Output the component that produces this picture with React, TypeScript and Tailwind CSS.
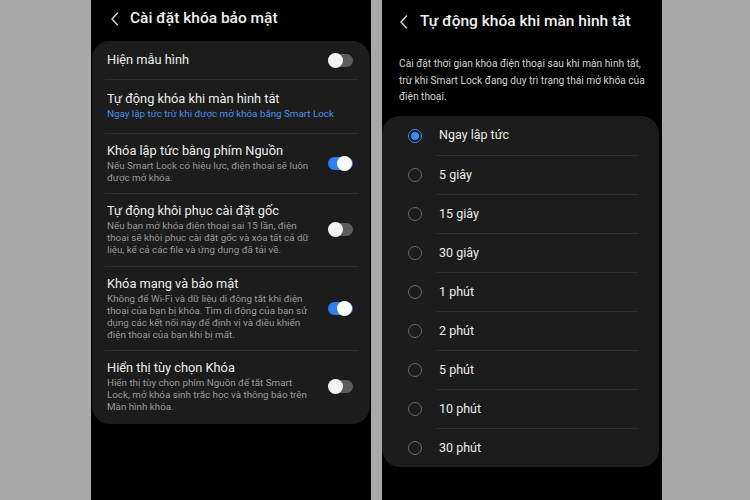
import React from "react";

const font = { fontFamily: "Roboto, 'Noto Sans', sans-serif" };

function Back() {
  return (
    <svg width="8" height="14" viewBox="0 0 8 14" className="shrink-0">
      <path d="M6.5 1 L1 7 L6.5 13" fill="none" stroke="#d6d6d6" strokeWidth="1.4" strokeLinecap="round" strokeLinejoin="round" />
    </svg>
  );
}

function Toggle({ on }: { on: boolean }) {
  return on ? (
    <div className="relative w-[25px] h-[13px] rounded-full bg-[#2f7ff0] shrink-0">
      <div className="absolute right-[1px] top-[-1px] w-[15px] h-[15px] rounded-full bg-white" />
    </div>
  ) : (
    <div className="relative w-[25px] h-[13px] rounded-full bg-[#5c5c5c] shrink-0">
      <div className="absolute left-0 top-[-1px] w-[15px] h-[15px] rounded-full bg-[#f2f2f2]" />
    </div>
  );
}

function Divider({ cls }: { cls: string }) {
  return <div className={`h-px bg-[#2e2e2e] ${cls}`} />;
}

type Row = { title: string; sub?: string[]; blue?: boolean; toggle?: boolean; pt: string; pb: string };

const rows: Row[] = [
  { title: "Tự động khóa khi màn hình tắt", sub: ["Ngay lập tức trừ khi được mở khóa bằng Smart Lock"], blue: true, pt: "pt-[11px]", pb: "pb-[13px]" },
  { title: "Khóa lập tức bằng phím Nguồn", sub: ["Nếu Smart Lock có hiệu lực, điện thoại sẽ luôn", "được mở khóa."], toggle: true, pt: "pt-[9px]", pb: "pb-[9px]" },
  { title: "Tự động khôi phục cài đặt gốc", sub: ["Nếu bạn mở khóa điện thoại sai 15 lần, điện", "thoại sẽ khôi phục cài đặt gốc và xóa tất cả dữ", "liệu, kể cả các file và ứng dụng đã tải về."], toggle: false, pt: "pt-[9px]", pb: "pb-[10px]" },
  { title: "Khóa mạng và bảo mật", sub: ["Không để Wi-Fi và dữ liệu di động tắt khi điện", "thoại của bạn bị khóa. Tìm di động của bạn sử", "dụng các kết nối này để định vị và điều khiển", "điện thoại của bạn khi bị mất."], toggle: true, pt: "pt-[9px]", pb: "pb-[9px]" },
  { title: "Hiển thị tùy chọn Khóa", sub: ["Hiển thị tùy chọn phím Nguồn để tắt Smart", "Lock, mở khóa sinh trắc học và thông báo trên", "Màn hình khóa."], toggle: false, pt: "pt-[9px]", pb: "pb-[11px]" },
];

const options = ["Ngay lập tức", "5 giây", "15 giây", "30 giây", "1 phút", "2 phút", "5 phút", "10 phút", "30 phút"];

const description = [
  "Cài đặt thời gian khóa điện thoại sau khi màn hình tắt,",
  "trừ khi Smart Lock đang duy trì trạng thái mở khóa của",
  "điện thoại.",
];

function Radio({ on }: { on: boolean }) {
  return on ? (
    <div className="w-[14px] h-[14px] rounded-full border-[1.5px] border-[#3b8cf5] flex items-center justify-center shrink-0">
      <div className="w-[8px] h-[8px] rounded-full bg-[#3b8cf5]" />
    </div>
  ) : (
    <div className="w-[14px] h-[14px] rounded-full border-[1.5px] border-[#6a6a6a] shrink-0" />
  );
}

export default function App() {
  return (
    <div className="w-[750px] h-[500px] bg-[#a9a9a9] flex pl-[91px] gap-[11px] overflow-hidden" style={font}>
      {/* Security lock settings screen */}
      <div className="w-[280px] h-full bg-black flex flex-col">
        <div className="h-[41px] flex items-center pl-[20px] gap-[11px] pb-[3px]">
          <Back />
          <span className="text-[15.5px] text-[#f0f0f0] font-medium">Cài đặt khóa bảo mật</span>
        </div>
        <div className="mx-[1px] bg-[#1c1c1c] rounded-[18px] flex flex-col">
          <div className="h-[38px] flex items-center justify-between pl-[15px] pr-[17px]">
            <span className="text-[12.8px] text-[#ececec]">Hiện mẫu hình</span>
            <Toggle on={false} />
          </div>
          {rows.map((r) => (
            <React.Fragment key={r.title}>
              <Divider cls="ml-[13px] mr-[12px]" />
              <div className={`flex items-center justify-between pl-[15px] pr-[17px] ${r.pt} ${r.pb}`}>
                <div className="flex flex-col gap-[1px]">
                  <span className="text-[12.8px] leading-[16px] text-[#ececec]">{r.title}</span>
                  <div className={`text-[9.8px] leading-[12px] whitespace-nowrap ${r.blue ? "text-[#4d8ee8]" : "text-[#9a9a9a]"}`}>
                    {r.sub?.map((l) => (
                      <div key={l}>{l}</div>
                    ))}
                  </div>
                </div>
                {r.toggle !== undefined && <Toggle on={r.toggle} />}
              </div>
            </React.Fragment>
          ))}
        </div>
      </div>

      {/* Auto lock timeout screen */}
      <div className="w-[280px] h-full bg-black flex flex-col">
        <div className="h-[44px] flex items-center pl-[18px] gap-[12px]">
          <Back />
          <span className="text-[15.5px] text-[#f0f0f0] font-medium">Tự động khóa khi màn hình tắt</span>
        </div>
        <div className="pl-[17px] pt-[12px] text-[10.2px] leading-[16.5px] text-[#d4d4d4] h-[72px] whitespace-nowrap">
          {description.map((l) => (
            <div key={l}>{l}</div>
          ))}
        </div>
        <div className="mr-[3px] bg-[#1c1c1c] rounded-[18px] flex flex-col">
          {options.map((o, i) => (
            <div key={o} className="flex flex-col">
              {i > 0 && <Divider cls="ml-[54px] mr-[21px]" />}
              <div className={`${i === 0 ? "h-[39px]" : "h-[38px]"} flex items-center pl-[26px] gap-[17px]`}>
                <Radio on={i === 0} />
                <span className="text-[12.5px] text-[#ececec]">{o}</span>
              </div>
            </div>
          ))}
        </div>
      </div>
    </div>
  );
}
